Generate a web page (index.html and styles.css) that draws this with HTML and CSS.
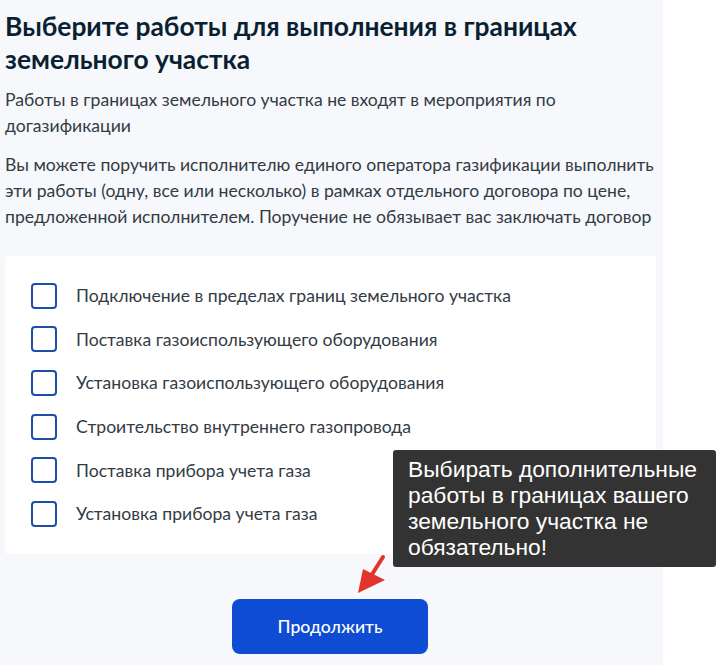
FILE: index.html
```html
<!DOCTYPE html>
<html lang="ru">
<head>
<meta charset="utf-8">
<link rel="stylesheet" href="styles.css">
</head>
<body>
<div class="page">
  <h1 class="title">Выберите работы для выполнения в границах земельного участка</h1>
  <p class="text">Работы в границах земельного участка не входят в мероприятия по догазификации</p>
  <p class="text text-second">Вы можете поручить исполнителю единого оператора газификации выполнить эти работы (одну, все или несколько) в рамках отдельного договора по цене, предложенной исполнителем. Поручение не обязывает вас заключать договор</p>
  <div class="card">
    <label class="row"><span class="box"></span><span class="label">Подключение в пределах границ земельного участка</span></label>
    <label class="row"><span class="box"></span><span class="label">Поставка газоиспользующего оборудования</span></label>
    <label class="row"><span class="box"></span><span class="label">Установка газоиспользующего оборудования</span></label>
    <label class="row"><span class="box"></span><span class="label">Строительство внутреннего газопровода</span></label>
    <label class="row"><span class="box"></span><span class="label">Поставка прибора учета газа</span></label>
    <label class="row"><span class="box"></span><span class="label">Установка прибора учета газа</span></label>
  </div>
  <div class="actions">
    <button class="btn">Продолжить</button>
  </div>
</div>
<div class="tooltip">Выбирать дополнительные работы в границах вашего земельного участка не обязательно!</div>
<svg class="arrow" width="40" height="50" viewBox="0 0 40 50">
  <line x1="29" y1="9" x2="17" y2="28" stroke="#e2342c" stroke-width="4" stroke-linecap="round"/>
  <polygon points="4,45 9,21 31,32" fill="#e2342c"/>
</svg>
</body>
</html>
```
FILE: styles.css
```css
html, body {
  margin: 0;
  padding: 0;
  background: #ffffff;
}
body {
  width: 723px;
  height: 665px;
  overflow: hidden;
  position: relative;
  font-family: Lato, "Noto Sans", sans-serif;
}
.page {
  width: 663px;
  height: 665px;
  box-sizing: border-box;
  background: #f6f8fb;
  padding: 10px 0 0 5px;
}
.title {
  margin: 0;
  font-size: 26.4px;
  line-height: 33px;
  font-weight: 700;
  color: #0b1f33;
  width: 640px;
}
.text {
  margin: 11px 0 0;
  font-size: 17.6px;
  line-height: 26px;
  color: #333b45;
  width: 656px;
}
.text-second {
  margin-top: 13px;
}
.card {
  margin-top: 26px;
  width: 651px;
  box-sizing: border-box;
  background: #ffffff;
  padding: 18px 26px 18px 26px;
  border-radius: 4px;
}
.row {
  display: flex;
  align-items: center;
  height: 43.6px;
  gap: 19px;
}
.box {
  width: 22px;
  height: 22px;
  border: 2px solid #1d4fa8;
  border-radius: 4px;
  flex: none;
}
.label {
  font-size: 17.6px;
  color: #333b45;
}
.actions {
  margin-top: 45px;
  padding-left: 227px;
}
.btn {
  width: 196px;
  height: 55px;
  border: none;
  border-radius: 8px;
  background: #0d4cd3;
  color: #ffffff;
  font-family: Lato, "Noto Sans", sans-serif;
  font-size: 17.6px;
  font-weight: 500;
}
.tooltip {
  position: absolute;
  left: 393px;
  top: 450px;
  width: 323px;
  height: 117px;
  box-sizing: border-box;
  padding: 6px 8px 0 15px;
  background: #333333;
  border-radius: 3px;
  color: #ffffff;
  font-family: "Liberation Sans", Arial, sans-serif;
  font-size: 22.8px;
  line-height: 26px;
}
.arrow {
  position: absolute;
  left: 354px;
  top: 548px;
}
```
